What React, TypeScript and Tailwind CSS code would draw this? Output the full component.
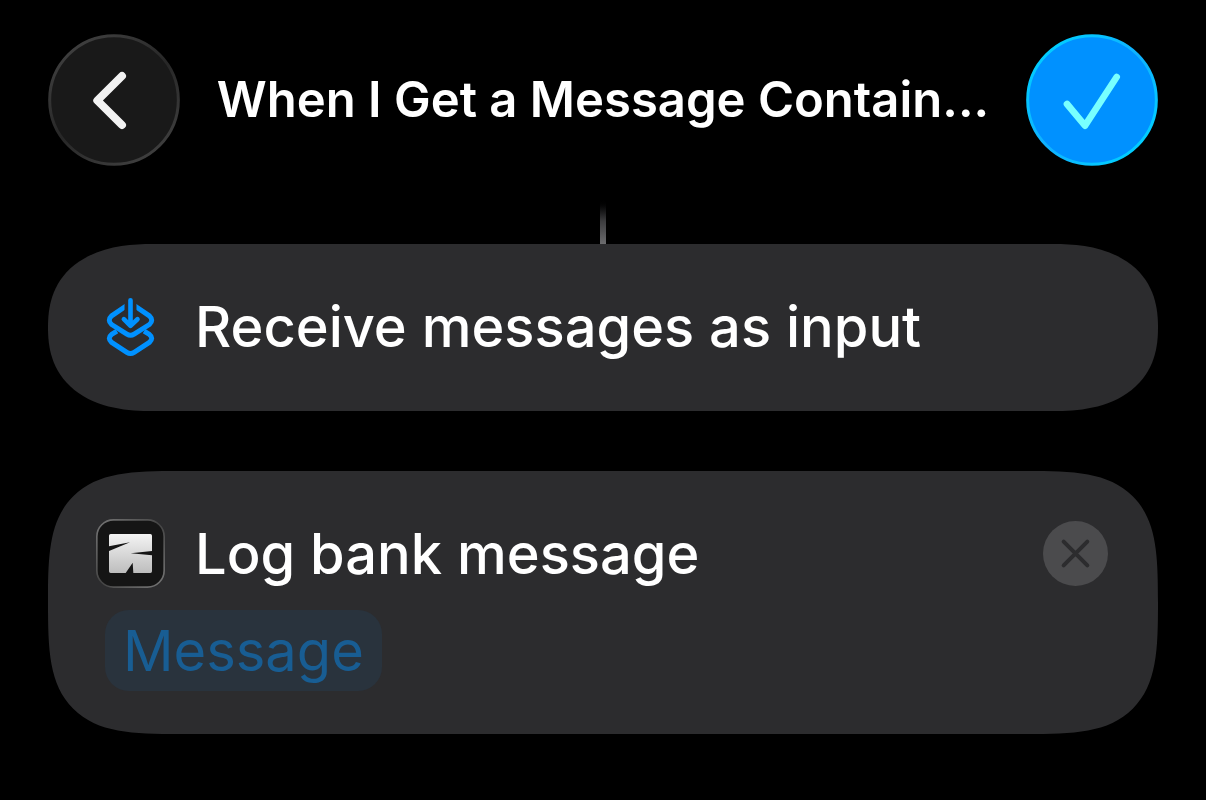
import type { ReactNode } from "react";
import clsx from "clsx";

function BackIcon() {
  return (
    <svg viewBox="24 27 396 396" className="size-full" fill="none" aria-hidden="true">
      <defs>
        <linearGradient id="back-rim" x1="0.15" y1="0" x2="0.85" y2="1">
          <stop offset="0" stopColor="#424242" />
          <stop offset="0.5" stopColor="#272727" />
          <stop offset="1" stopColor="#424242" />
        </linearGradient>
      </defs>
      <circle cx="222" cy="225" r="193" fill="#191919" stroke="url(#back-rim)" strokeWidth="9" />
      <path
        d="M246 153 172 226.500 246 300"
        stroke="#f2f2f2"
        strokeWidth="24"
        strokeLinecap="round"
        strokeLinejoin="round"
      />
    </svg>
  );
}

function ConfirmIcon() {
  return (
    <svg viewBox="30 27 396 396" className="size-full" fill="none" aria-hidden="true">
      <defs>
        <linearGradient id="confirm-rim" x1="0" y1="0" x2="1" y2="1">
          <stop offset="0.1" stopColor="#00d0ff" />
          <stop offset="0.5" stopColor="#10b0ff" />
          <stop offset="0.9" stopColor="#00d0ff" />
        </linearGradient>
      </defs>
      <circle cx="228" cy="225" r="193" fill="#0091ff" stroke="url(#confirm-rim)" strokeWidth="9" />
      <path
        d="M153 237 207 302 302 156"
        stroke="#78ffff"
        strokeWidth="20"
        strokeLinecap="round"
        strokeLinejoin="round"
      />
    </svg>
  );
}

function ShortcutInputIcon() {
  return (
    <svg
      viewBox="51 39 140 175"
      className="h-[58px] w-[47px] overflow-visible"
      fill="none"
      stroke="#0091ff"
      strokeWidth="15"
      strokeLinejoin="round"
      aria-hidden="true"
    >
      <path d="M80 139 64 149Q50 160 64 173L110 203Q121 210 132 203L178 173Q192 160 178 149L162 139" />
      <path d="M112 60 64 93Q50 106 64 119L110 148Q121 155 132 148L178 119Q192 106 178 93L130 60" />
      <rect x="103" y="46" width="36" height="38" fill="#2c2c2e" stroke="none" />
      <path d="M121 46V121M101 103 121 123 142 103" strokeWidth="14" strokeLinecap="round" />
    </svg>
  );
}

function BankAppIcon() {
  return (
    <svg viewBox="30 27 207 207" className="size-[69px]" aria-hidden="true">
      <defs>
        <linearGradient id="app-rim" x1="0" y1="0" x2="1" y2="1">
          <stop offset="0" stopColor="#777" />
          <stop offset="0.5" stopColor="#444" />
          <stop offset="1" stopColor="#777" />
        </linearGradient>
        <linearGradient id="app-mark" x1="0" y1="0" x2="0" y2="1">
          <stop offset="0" stopColor="#f4f4f4" />
          <stop offset="1" stopColor="#bdbdbd" />
        </linearGradient>
      </defs>
      <rect
        x="32.500"
        y="29.500"
        width="202"
        height="202"
        rx="50"
        fill="#151515"
        stroke="url(#app-rim)"
        strokeWidth="5"
      />
      <path
        d="M74 72H193Q198 72 198 77V123L134 130 198 136V184Q198 189 193 189H142L140 158 119 189H74Q69 189 69 184V123L132 97 69 109V77Q69 72 74 72Z"
        fill="url(#app-mark)"
      />
    </svg>
  );
}

function RemoveIcon() {
  return (
    <svg viewBox="39 33 195 195" className="size-full" aria-hidden="true">
      <circle cx="136.500" cy="130.500" r="97.500" fill="#4b4b4d" />
      <path
        d="M101 95 172 166M172 95 101 166"
        stroke="#2c2c2e"
        strokeWidth="12"
        strokeLinecap="round"
      />
    </svg>
  );
}

function Card({ className, children }: { className?: string; children: ReactNode }) {
  return (
    <section className={clsx("rounded-[90px] bg-[#2c2c2e] px-12", className)}>
      {children}
    </section>
  );
}

export default function App() {
  return (
    <div className="min-h-screen bg-black px-12 pt-[34px] pb-16 font-['Inter',sans-serif] text-white">
      <header className="flex items-center justify-between">
        <button type="button" aria-label="Back" className="size-[132px] shrink-0 rounded-full">
          <BackIcon />
        </button>
        <h1 className="min-w-0 text-center text-[49px] leading-[60px] font-semibold whitespace-nowrap">
          When I Get a Message Contain...
        </h1>
        <button type="button" aria-label="Done" className="size-[132px] shrink-0 rounded-full">
          <ConfirmIcon />
        </button>
      </header>

      <main className="flex flex-col pt-8">
        {/* Connector from the trigger above */}
        <div className="mx-auto h-[46px] w-1.5 bg-linear-to-b from-black via-[#3c3c3e] to-[#6c6c6e]" />

        {/* Smooth corners where the browser has them, plain round ones elsewhere */}
        <Card className="pt-[53px] pb-[54px] [corner-shape:superellipse(1.25)] supports-[corner-shape:squircle]:rounded-[105px/84px]">
          <div className="flex items-center">
            <div className="flex w-[69px] shrink-0 justify-center">
              <ShortcutInputIcon />
            </div>
            <h2 className="ml-[30px] text-[56px] leading-[60px] font-medium">Receive messages as input</h2>
          </div>
        </Card>

        <Card className="mt-[60px] pt-12 pb-[43px] [corner-shape:superellipse(1.7)] supports-[corner-shape:squircle]:rounded-[132px]">
          <div className="flex items-center">
            <BankAppIcon />
            <h2 className="ml-[30px] text-[56px] leading-[60px] font-medium">Log bank message</h2>
            <button type="button" aria-label="Remove action" className="mr-0.5 ml-auto size-[65px] rounded-full">
              <RemoveIcon />
            </button>
          </div>
          <button
            type="button"
            className="mt-[22px] ml-[9px] block rounded-3xl bg-[#29333d] px-[18px] pt-[11px] pb-2.5 text-[56px] leading-[60px] text-[#185d93]"
          >
            Message
          </button>
        </Card>
      </main>
    </div>
  );
}
